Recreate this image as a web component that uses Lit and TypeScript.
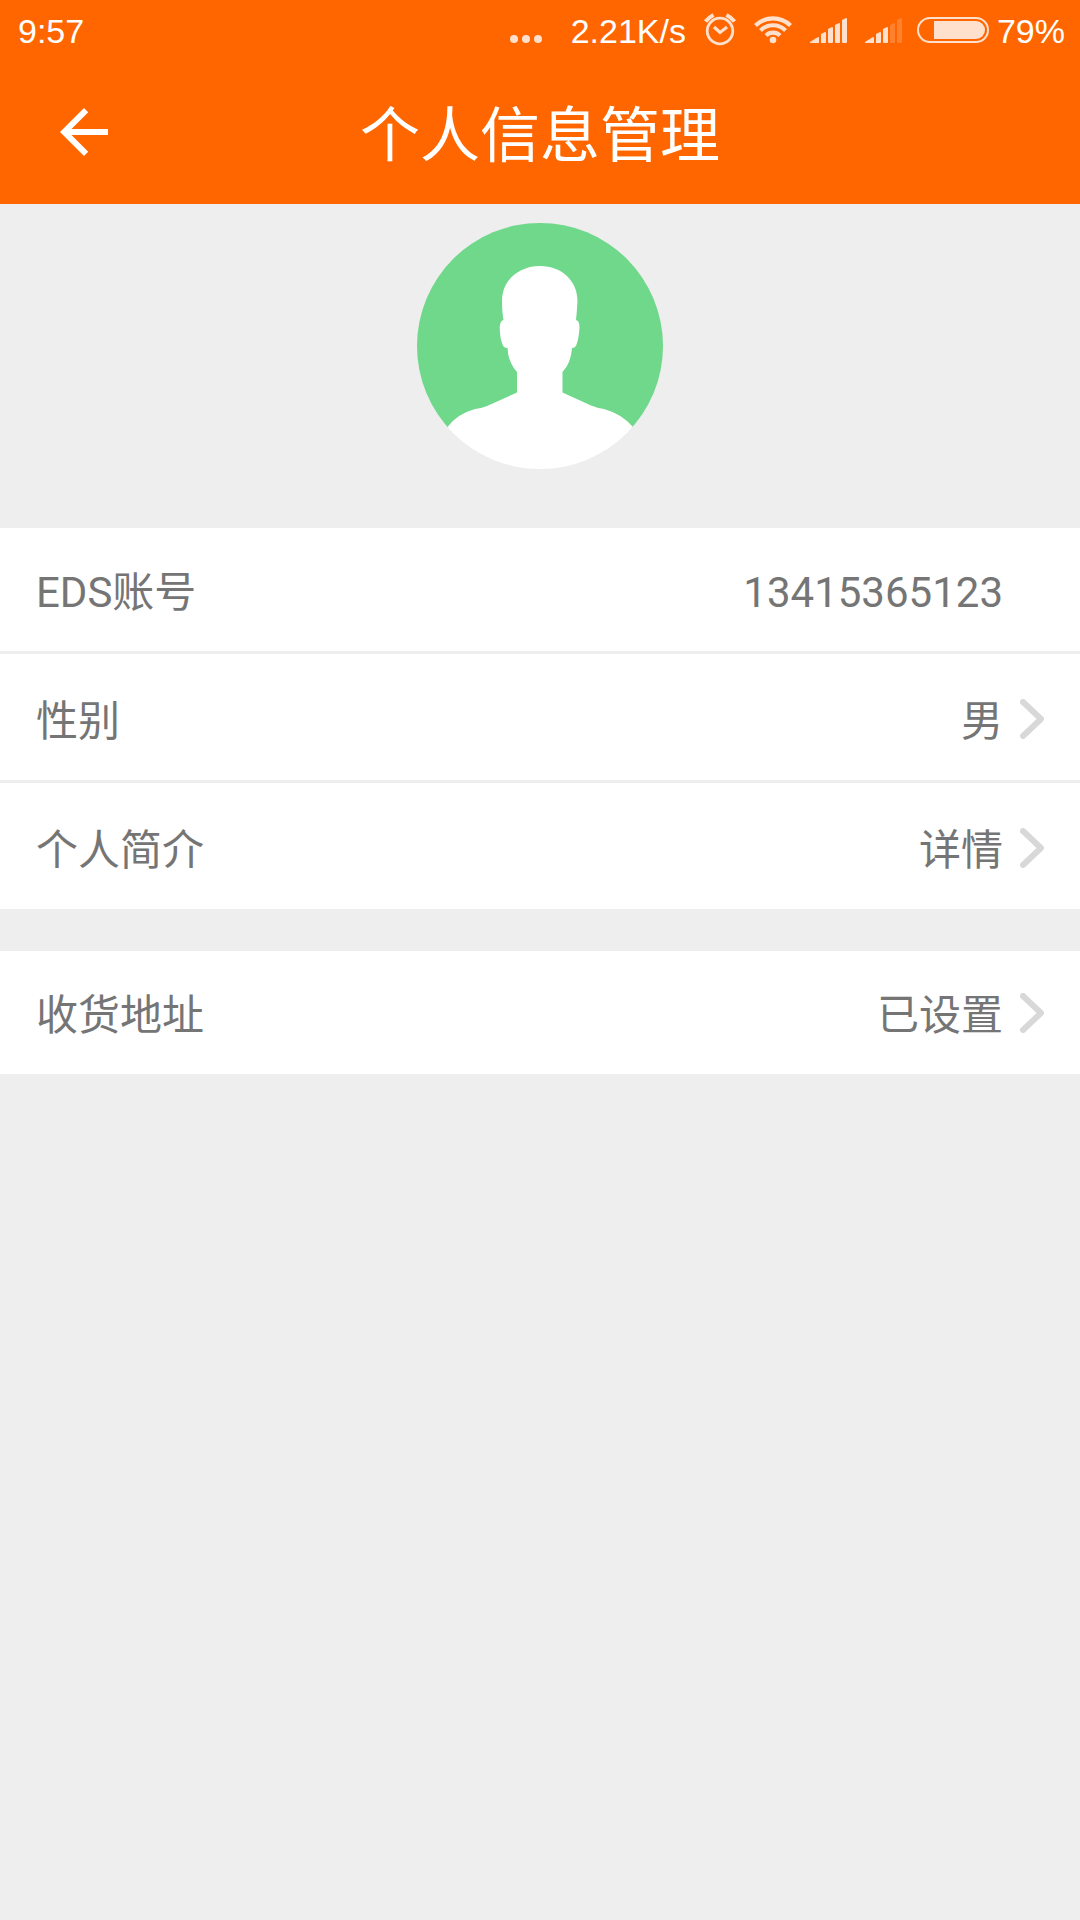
import { LitElement, html, svg, css, nothing } from "lit";
import { customElement, property } from "lit/decorators.js";

const bars = (solid: number) => svg`
  <path d="M0 43V42L8 37Q9 37 9 38V43Z"/>
  <path d="M11 43V34L15 32Q16 32 16 33V42Q16 43 15 43H11Z"/>
  <path d="M18 42V29L22 27Q23 27 23 28V42Q23 43 22 43H19Q18 43 18 42Z"/>
  <path opacity=${solid > 3 ? 1 : 0.22} d="M25 42V25L29 23Q30 23 30 24V42Q30 43 29 43H26Q25 43 25 42Z"/>
  <path opacity=${solid > 4 ? 1 : 0.22} d="M32 42V20L36 18Q37 18 37 19V42Q37 43 36 43H33Q32 43 32 42Z"/>`;

@customElement("status-bar")
export class StatusBar extends LitElement {
  static styles = css`
    :host {
      display: flex;
      align-items: center;
      justify-content: space-between;
      height: 60px;
      padding: 0 15px 0 18px;
      color: #fff;
      font: 34px/60px "Liberation Sans", Arial, sans-serif;
    }
    .side {
      display: flex;
      align-items: center;
      gap: 15px;
    }
    .battery {
      display: flex;
      align-items: center;
      gap: 8px;
    }
    .text {
      padding-top: 2px;
    }
    svg {
      display: block;
      fill: #ffe0cc;
    }
    .line {
      fill: none;
      stroke: #ffe0cc;
    }
  `;

  render() {
    return html`
      <time class="text">9:57</time>
      <div class="side">
        <svg width="46" height="60" viewBox="0 0 46 60" aria-hidden="true">
          <circle cx="4" cy="39" r="4" /><circle cx="16" cy="39" r="4" /><circle cx="28" cy="39" r="4" />
        </svg>
        <span class="text">2.21K/s</span>
        <svg width="37" height="60" viewBox="701 0 37 60" aria-hidden="true">
          <circle class="line" cx="720" cy="31" r="12.800" stroke-width="2.800" />
          <path class="line" stroke-width="3.200" d="M714 27L720 32.500L727 27" />
          <path class="line" stroke-width="4" d="M705.500 21.500Q708.500 17.500 713.500 15M734.500 21.500Q731.500 17.500 726.500 15" />
        </svg>
        <svg width="40" height="60" viewBox="753 0 40 60" aria-hidden="true">
          <circle cx="773" cy="40" r="3.300" />
          <path class="line" stroke-width="4.200" d="M755.500 25.500A25 25 0 0 1 790.500 25.500M760.500 30.500A17.500 17.500 0 0 1 785.500 30.500M766 35.500A10 10 0 0 1 780 35.500" />
        </svg>
        <svg width="42" height="60" viewBox="-2 0 42 60" aria-hidden="true">${bars(5)}</svg>
        <svg width="37" height="60" viewBox="0 0 37 60" aria-hidden="true">${bars(3)}</svg>
        <div class="battery">
          <svg width="72" height="60" viewBox="917 0 72 60" aria-hidden="true">
            <rect class="line" x="918" y="18" width="70" height="24" rx="12" stroke-width="2" />
            <path d="M934 21H976A9 9 0 0 1 976 39H934Z" />
          </svg>
          <span class="text">79%</span>
        </div>
      </div>
    `;
  }
}

@customElement("info-row")
export class InfoRow extends LitElement {
  @property() label = "";
  @property() value = "";
  @property({ type: Boolean }) link = false;

  static styles = css`
    :host {
      display: block;
      background: #fff;
    }
    .row {
      box-sizing: border-box;
      display: flex;
      align-items: center;
      justify-content: space-between;
      width: 100%;
      padding: 32px 36px 31px;
      border: 0;
      background: none;
      color: #757575;
      font: 42px/54px Roboto, "Noto Sans CJK SC", sans-serif;
      text-align: left;
    }
    :host([link]) .row {
      cursor: pointer;
    }
    :host([tall]) .row {
      padding: 35px 36px 31px;
    }
    .text {
      display: block;
      padding-top: 6px;
    }
    .end {
      display: flex;
      align-items: center;
      gap: 17px;
    }
    .arrow {
      display: block;
      width: 24px;
      height: 40px;
      fill: none;
      stroke: #d8d8d8;
      stroke-width: 6;
      stroke-linecap: round;
      stroke-linejoin: round;
    }
  `;

  render() {
    const content = html`
      <span class="text">${this.label}</span>
      <span class="end">
        <span class="text">${this.value}</span>
        <svg class="arrow" viewBox="0 0 24 40" aria-hidden="true">
          ${this.link ? svg`<path d="M3 3L21 20L3 37" />` : nothing}
        </svg>
      </span>
    `;
    return this.link
      ? html`<button type="button" class="row">${content}</button>`
      : html`<div class="row">${content}</div>`;
  }
}

@customElement("app-root")
export class AppRoot extends LitElement {
  static styles = css`
    :host {
      display: block;
      min-height: 100vh;
      background: #eee;
      font-family: Roboto, "Noto Sans CJK SC", sans-serif;
    }
    .top {
      background: #f60;
      color: #fff;
    }
    .toolbar {
      display: grid;
      grid-template-columns: 72px 1fr 72px;
      align-items: center;
      height: 144px;
      padding: 0 48px;
    }
    .back {
      padding: 0;
      border: 0;
      background: none;
      cursor: pointer;
    }
    .back svg {
      display: block;
      fill: #fff;
    }
    h1 {
      margin: 0;
      padding-top: 10px;
      font-size: 60px;
      font-weight: 400;
      line-height: 74px;
      text-align: center;
    }
    .portrait {
      display: flex;
      justify-content: center;
      padding: 19px 0 59px;
    }
    .group {
      display: grid;
      gap: 3px;
      margin-bottom: 42px;
    }
  `;

  render() {
    return html`
      <header class="top">
        <status-bar></status-bar>
        <div class="toolbar">
          <button type="button" class="back" aria-label="返回">
            <svg width="72" height="72" viewBox="0 0 24 24">
              <path d="M20 11H7.830l5.590-5.590L12 4l-8 8 8 8 1.410-1.410L7.830 13H20v-2z" />
            </svg>
          </button>
          <h1>个人信息管理</h1>
        </div>
      </header>
      <main>
        <div class="portrait">
          <svg width="246" height="246" viewBox="0 0 246 246" role="img" aria-label="头像">
            <defs><clipPath id="disc"><circle cx="123" cy="123" r="123" /></clipPath></defs>
            <g clip-path="url(#disc)">
              <rect width="246" height="205" fill="#6fd88b" />
              <path
                fill="#fff"
                d="M123 43C101 43 85 58 85 78Q85 89 86.500 97Q83 98 82.700 104Q83 115 85 120Q86 125 90.500 125Q91 139 100 149V169.500L70 183Q64 185.500 58 186Q40 191 30.500 204V246H216V204Q205 191 187 186Q180 185 174 182.500L145.500 169.500V149Q154 140 155 125Q159 125 160 120Q162 114 162.500 104Q162.500 98 159 97Q160 88 160.500 78C160.500 58 145 43 123 43Z"
              />
            </g>
          </svg>
        </div>
        <section class="group">
          <info-row label="EDS账号" value="13415365123"></info-row>
          <info-row label="性别" value="男" link tall></info-row>
          <info-row label="个人简介" value="详情" link tall></info-row>
        </section>
        <section class="group">
          <info-row label="收货地址" value="已设置" link></info-row>
        </section>
      </main>
    `;
  }
}
